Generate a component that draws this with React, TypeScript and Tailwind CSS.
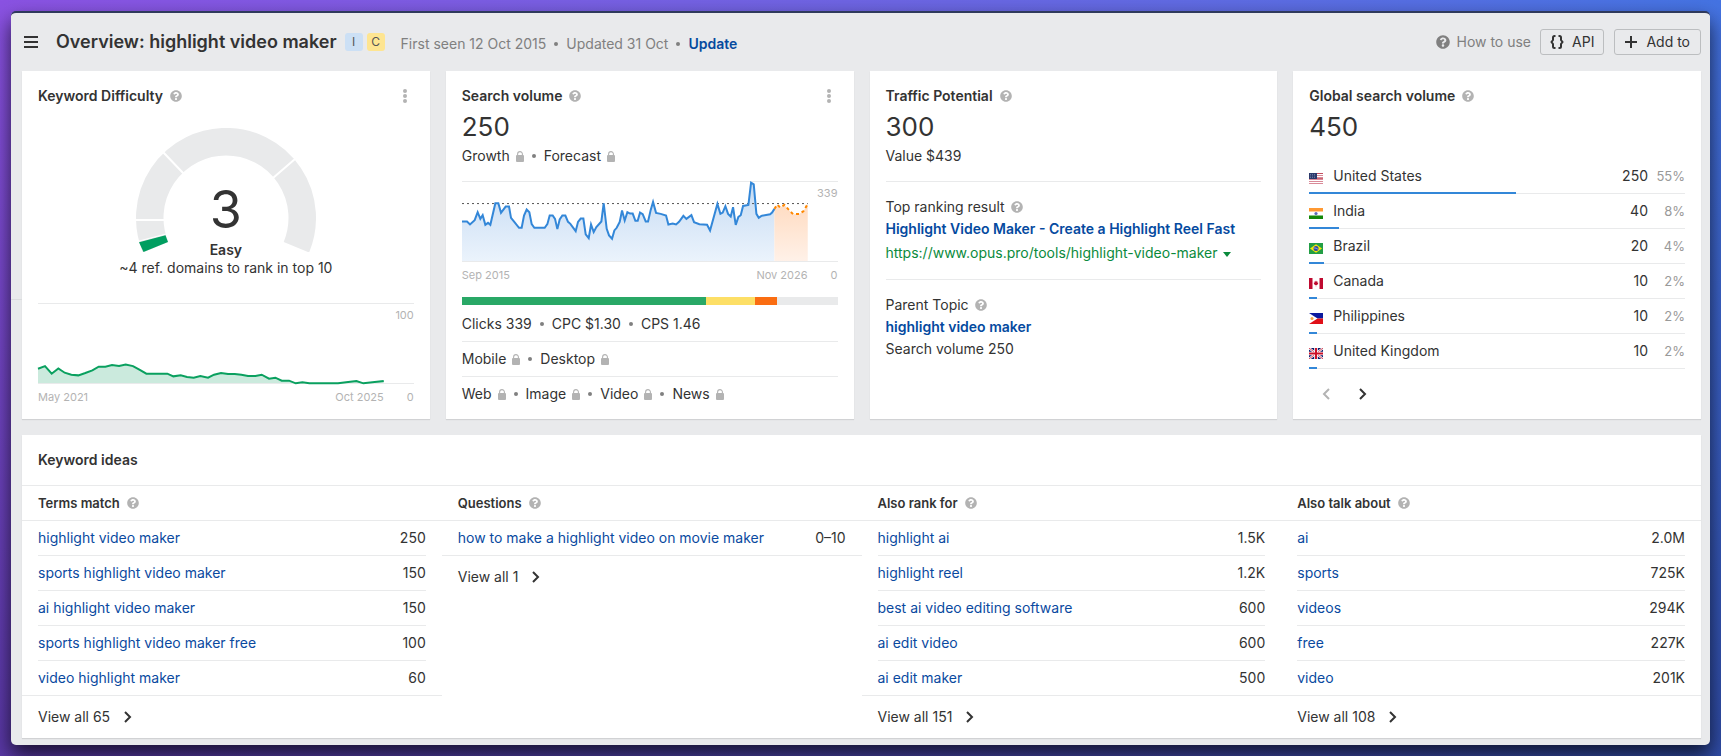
import type { ReactNode } from "react";
import { FaQuestionCircle } from "react-icons/fa";

type Idea = { keyword: string; volume: string };
type IdeaGroup = { title: string; total: number; ideas: Idea[] };

const difficultyPoints =
  "0,195 21,187 41,210 61,194 80,207 100,213 121,215 142,208 163,200 182,189 202,189 222,184 243,187 263,182 285,187 304,198 325,210 388,210 406,218 428,215 447,220 467,222 487,217 510,222 528,213 549,208 570,211 590,211 610,213 630,217 652,217 671,213 693,225 712,222 731,231 753,231 773,239 793,236 814,239 900,239 924,236 955,232 976,239 1037,232";

const volumePoints =
  "0,119 15,119 24,128 38,115 47,91 55,111 62,100 70,129 78,123 85,129 100,64 109,64 117,93 131,74 141,74 147,108 155,118 171,138 179,138 186,101 194,83 202,91 209,127 217,138 248,138 256,127 263,101 272,101 279,111 286,142 293,113 301,101 310,101 318,120 325,126 341,148 348,120 356,110 364,110 371,158 380,169 387,128 395,151 403,136 418,119 425,64 434,141 441,161 450,171 457,146 464,138 473,120 480,86 488,116 496,91 504,95 512,95 520,117 527,117 534,92 542,97 551,119 558,119 566,84 573,60 582,93 596,96 612,101 619,128 632,125 642,128 651,120 664,102 673,111 688,100 696,121 712,127 735,129 744,146 766,66 775,96 782,92 790,73 798,96 806,104 813,76 821,129 829,105 836,100 843,72 859,69 867,2 875,7 883,96 890,108 898,102 924,97 930,92 937,81";

const forecastPoints = "937,81 946,68 954,77 967,69 984,88 993,97 1012,96 1024,88 1037,66";

const countries = [
  { code: "us", name: "United States", volume: 250, share: 55 },
  { code: "in", name: "India", volume: 40, share: 8 },
  { code: "br", name: "Brazil", volume: 20, share: 4 },
  { code: "ca", name: "Canada", volume: 10, share: 2 },
  { code: "ph", name: "Philippines", volume: 10, share: 2 },
  { code: "gb", name: "United Kingdom", volume: 10, share: 2 },
];

const ideaGroups: IdeaGroup[] = [
  {
    title: "Terms match",
    total: 65,
    ideas: [
      { keyword: "highlight video maker", volume: "250" },
      { keyword: "sports highlight video maker", volume: "150" },
      { keyword: "ai highlight video maker", volume: "150" },
      { keyword: "sports highlight video maker free", volume: "100" },
      { keyword: "video highlight maker", volume: "60" },
    ],
  },
  {
    title: "Questions",
    total: 1,
    ideas: [{ keyword: "how to make a highlight video on movie maker", volume: "0–10" }],
  },
  {
    title: "Also rank for",
    total: 151,
    ideas: [
      { keyword: "highlight ai", volume: "1.5K" },
      { keyword: "highlight reel", volume: "1.2K" },
      { keyword: "best ai video editing software", volume: "600" },
      { keyword: "ai edit video", volume: "600" },
      { keyword: "ai edit maker", volume: "500" },
    ],
  },
  {
    title: "Also talk about",
    total: 108,
    ideas: [
      { keyword: "ai", volume: "2.0M" },
      { keyword: "sports", volume: "725K" },
      { keyword: "videos", volume: "294K" },
      { keyword: "free", volume: "227K" },
      { keyword: "video", volume: "201K" },
    ],
  },
];

const Help = () => <FaQuestionCircle className="h-3 w-3 shrink-0 text-[#b3b3b3]" />;

const Dot = () => <span className="block h-1 w-1 shrink-0 rounded-full bg-[#808080]" />;

const Lock = () => (
  <svg className="h-[11px] w-2 shrink-0" viewBox="0 0 8 11">
    <rect y="4" width="8" height="7" rx="1" fill="#b3b3b3" />
    <path d="M1.6 5V3a2.4 2.4 0 0 1 4.8 0v2" fill="none" stroke="#b3b3b3" strokeWidth="1.1" />
  </svg>
);

const Chevron = ({ left = false }: { left?: boolean }) => (
  <svg className="h-3 w-2" viewBox="0 0 8 12" fill="none" stroke="currentColor" strokeWidth="2">
    <path d={left ? "M7 1 2 6l5 5" : "M1 1l5 5-5 5"} />
  </svg>
);

const Flag = ({ code }: { code: string }) => (
  <svg className="h-[11px] w-[14px]" viewBox="0 0 14 11">
    {code === "us" && (
      <>
        <rect width="14" height="11" fill="#fff" />
        <path d="M0 .5h14M0 2.5h14M0 4.5h14M0 6.5h14M0 8.5h14M0 10.5h14" stroke="#d98a98" />
        <path d="M8 .5h6M8 5.5h6" stroke="#bd3d50" strokeWidth=".8" />
        <rect width="8" height="6" fill="#2b3a6b" />
        <path d="M1 1.5h6M1 3h6M1 4.5h6" stroke="#8f9abd" strokeWidth=".6" strokeDasharray="1 1" />
      </>
    )}
    {code === "in" && (
      <>
        <rect width="14" height="11" fill="#fff" />
        <rect width="14" height="3.5" fill="#ff9933" />
        <rect y="7.5" width="14" height="3.5" fill="#138808" />
        <circle cx="7" cy="5.5" r="1.6" fill="#5a68b8" />
      </>
    )}
    {code === "br" && (
      <>
        <rect width="14" height="11" fill="#229e45" />
        <path d="M7 1.2 13 5.5 7 9.8 1 5.5Z" fill="#f8e509" />
        <circle cx="7" cy="5.5" r="2.5" fill="#2b49a3" />
        <path d="M4.7 5c1.7-.2 3.4.3 4.5 1.6" stroke="#c9d4e8" strokeWidth=".7" fill="none" />
      </>
    )}
    {code === "ca" && (
      <>
        <rect width="14" height="11" fill="#fff" />
        <path d="M0 0h3.5v11H0zM10.5 0H14v11h-3.5z" fill="#bf0a30" />
        <path d="m7 2.5.7 1.2.8-.4-.2 1.4.9-.2-.3.9.5.4-1.5 1.2H7.2v1.5h-.4V7H6.1L4.600 5.800l.5-.4-.3-.9.9.2-.2-1.400.8.4Z" fill="#bf0a30" />
      </>
    )}
    {code === "ph" && (
      <>
        <rect width="14" height="5.5" fill="#0c1a9e" />
        <rect y="5.5" width="14" height="5.5" fill="#e01018" />
        <path d="M0 0 8.5 5.5 0 11Z" fill="#fff" />
        <circle cx="3" cy="5.5" r="1.5" fill="#f5a742" />
      </>
    )}
    {code === "gb" && (
      <>
        <rect width="14" height="11" fill="#0a1a6b" />
        <path d="M0 0l14 11M14 0 0 11" stroke="#fff" strokeWidth="2.2" />
        <path d="M0 0l14 11M14 0 0 11" stroke="#cc1028" strokeWidth=".8" />
        <path d="M7 0v11M0 5.5h14" stroke="#fff" strokeWidth="3.6" />
        <path d="M7 0v11M0 5.5h14" stroke="#cc1028" strokeWidth="2" />
      </>
    )}
  </svg>
);

const Card = ({ title, menu = false, children }: { title: string; menu?: boolean; children: ReactNode }) => (
  <section className="flex flex-col bg-white px-4 pt-[15px] shadow-[0_1px_1px_rgba(0,0,0,0.1)]">
    <div className="flex h-5 items-center gap-[7px]">
      <h2 className="font-semibold">{title}</h2>
      <Help />
      {menu && (
        <button aria-label={`${title} menu`} className="mr-[3px] ml-auto flex w-3 flex-col items-center gap-px">
          <span className="h-1 w-1 rounded-full bg-[#b3b3b3]" />
          <span className="h-1 w-1 rounded-full bg-[#b3b3b3]" />
          <span className="h-1 w-1 rounded-full bg-[#b3b3b3]" />
        </button>
      )}
    </div>
    {children}
  </section>
);

const Chart = ({ max, from, to, children }: { max: number; from: string; to: string; children: ReactNode }) => (
  <div className="text-[11px] leading-4 text-[#b3b3b3]">
    <div className="flex border-y border-[#e9eaeb]">
      <svg className="h-[79px] min-w-0 flex-1 overflow-visible" viewBox="0 0 1037 238" preserveAspectRatio="none">
        {children}
      </svg>
      <span className="w-[30px] pt-[3px] text-right">{max}</span>
    </div>
    <div className="flex pt-[5px]">
      <span>{from}</span>
      <span className="ml-auto">{to}</span>
      <span className="w-[30px] text-right">0</span>
    </div>
  </div>
);

const LockedList = ({ items }: { items: string[] }) => (
  <ul className="flex items-center gap-2">
    {items.map((item, i) => (
      <li key={item} className="flex items-center gap-2">
        {i > 0 && <Dot />}
        <span className="flex items-center gap-[6px]">
          {item}
          <Lock />
        </span>
      </li>
    ))}
  </ul>
);

const Gauge = () => (
  <div className="relative mx-auto mt-[22px] flex w-[180px] flex-col items-center">
    <svg className="h-[124px] w-[180px]" viewBox="0 0 180 124">
      <path d="M19.6 119.2A76.25 76.25 0 1 1 160.4 119.2" fill="none" stroke="#e9eaeb" strokeWidth="27.5" />
      <path d="M0 92H29M27 24 48 46M159 31 137 50" stroke="#fff" strokeWidth="2" />
      <path d="M3 114.3 29.5 107.3 32 114 7.5 124Z" fill="#009e60" />
      <path d="M2 113.3 30 106" stroke="#fff" />
    </svg>
    <span className="absolute top-[56px] text-[52px] leading-[52px]">3</span>
  </div>
);

const IdeasColumn = ({ group }: { group: IdeaGroup }) => (
  <div>
    <div className="flex h-[35px] items-center gap-[7px] border-b border-[#e9eaeb] px-4 text-[13px]">
      <h3 className="font-semibold">{group.title}</h3>
      <Help />
    </div>
    <div className="border-b border-[#e9eaeb] px-4">
      <table className="w-full border-separate border-spacing-0">
        <tbody>
          {group.ideas.map((idea, i) => (
            <tr key={idea.keyword} className={i === 0 ? "h-[34px]" : "h-[35px] *:border-t *:border-[#e9eaeb]"}>
              <td>
                <a href="#" className="text-[#0a4a9f]">
                  {idea.keyword}
                </a>
              </td>
              <td className="text-right">{idea.volume}</td>
            </tr>
          ))}
        </tbody>
      </table>
    </div>
    <a href="#" className="flex h-[42px] items-center gap-[14px] px-4">
      View all {group.total}
      <Chevron />
    </a>
  </div>
);

const App = () => {
  return (
    <div className="min-h-screen bg-linear-to-r from-[#8a52e2] to-[#4473e2] font-[Inter,sans-serif] text-sm leading-5 text-[#333]">
      <div className="min-h-screen bg-linear-to-b from-transparent to-[#10104a]/40 p-[11px]">
        <main className="relative rounded-[5px] border-t-2 border-[#2f3a5c] bg-[#e9eaec] pr-[9px] pb-[7px] pl-[11px] shadow-[0_10px_20px_rgba(0,0,0,0.7)]">
          <div className="absolute top-[286px] left-0 h-px w-[11px] bg-[#dadcde]" />
          <header className="flex h-[58px] items-center">
            <button aria-label="Menu" className="ml-[2px] flex w-[14px] flex-col gap-[3px]">
              <span className="h-[2px] w-full bg-[#333]" />
              <span className="h-[2px] w-full bg-[#333]" />
              <span className="h-[2px] w-full bg-[#333]" />
            </button>
            <h1 className="ml-[18px] text-lg font-semibold">Overview: highlight video maker</h1>
            <span className="ml-2 flex h-[18px] w-[18px] items-center justify-center rounded-[3px] bg-[#cce0f5] text-xs text-[#555]">
              I
            </span>
            <span className="ml-1 flex h-[18px] w-[18px] items-center justify-center rounded-[3px] bg-[#fee591] text-xs text-[#555]">
              C
            </span>
            <div className="ml-4 flex items-center gap-2 pt-[3px] text-[#808080]">
              <span>First seen 12 Oct 2015</span>
              <Dot />
              <span>Updated 31 Oct</span>
              <Dot />
              <a href="#" className="font-semibold text-[#054a9f]">
                Update
              </a>
            </div>
            <a href="#" className="ml-auto flex items-center gap-[6px] text-[#808080]">
              <FaQuestionCircle className="h-[14px] w-[14px]" />
              How to use
            </a>
            <button className="ml-[9px] flex h-[26px] items-center gap-2 rounded-[3px] border border-[#bcbec0] px-[9px]">
              <svg className="h-[14px] w-[14px]" viewBox="0 0 14 14" fill="none" stroke="#333" strokeWidth="2">
                <path d="M5.5 1H4.5Q3 1 3 2.500V5L1.500 7 3 9v2.500Q3 13 4.500 13h1M8.500 1h1Q11 1 11 2.500V5l1.500 2L11 9v2.500Q11 13 9.500 13h-1" />
              </svg>
              API
            </button>
            <button className="ml-[10px] flex h-[26px] items-center gap-[9px] rounded-[3px] border border-[#bcbec0] px-[10px]">
              <svg className="h-3 w-3" viewBox="0 0 12 12" stroke="#333" strokeWidth="2">
                <path d="M6 0v12M0 6h12" />
              </svg>
              Add to
            </button>
          </header>

          <div className="grid grid-cols-4 gap-4">
            <Card title="Keyword Difficulty" menu>
              <Gauge />
              <div className="-mt-[11px] flex flex-col items-center leading-[18px]">
                <b className="font-semibold">Easy</b>
                <span>~4 ref. domains to rank in top 10</span>
              </div>
              <div className="mt-[26px] mb-[14px]">
                <Chart max={100} from="May 2021" to="Oct 2025">
                  <polygon points={`0,238 ${difficultyPoints} 1037,238`} fill="#cbeadd" />
                  <polyline points={difficultyPoints} fill="none" stroke="#0aa05f" strokeWidth="2" vectorEffect="non-scaling-stroke" />
                </Chart>
              </div>
            </Card>

            <Card title="Search volume" menu>
              <p className="mt-1 text-[26px] leading-[34px]">250</p>
              <div className="mt-[2px]">
                <LockedList items={["Growth", "Forecast"]} />
              </div>
              <div className="mt-[15px]">
                <Chart max={339} from="Sep 2015" to="Nov 2026">
                  <defs>
                    <linearGradient id="volumeFill" x1="0" y1="0" x2="0" y2="1">
                      <stop offset="0" stopColor="#c5dbf3" />
                      <stop offset="1" stopColor="#ebf3fc" />
                    </linearGradient>
                    <linearGradient id="forecastFill" x1="0" y1="0" x2="0" y2="1">
                      <stop offset="0" stopColor="#ffdcc2" />
                      <stop offset="1" stopColor="#fff1e8" />
                    </linearGradient>
                  </defs>
                  <polygon points={`0,238 ${volumePoints} 937,238`} fill="url(#volumeFill)" />
                  <polygon points={`937,238 ${forecastPoints} 1037,238`} fill="url(#forecastFill)" />
                  <path d="M0 65H1037" stroke="#555" strokeWidth="1" strokeDasharray="2 3" vectorEffect="non-scaling-stroke" />
                  <polyline points={volumePoints} fill="none" stroke="#3387d8" strokeWidth="2" vectorEffect="non-scaling-stroke" />
                  <polyline points={forecastPoints} fill="none" stroke="#ff8800" strokeWidth="2" strokeDasharray="3 3" vectorEffect="non-scaling-stroke" />
                </Chart>
              </div>
              <div className="mt-[14px] flex h-2 bg-[#e9eaeb]">
                <span className="w-[65%] bg-[#29a866]" />
                <span className="w-[13%] bg-[#fddf66]" />
                <span className="w-[6%] bg-[#fa6d12]" />
              </div>
              <div className="mt-[2px] flex h-[35px] items-center gap-2 border-b border-[#e9eaeb]">
                <span>Clicks 339</span>
                <Dot />
                <span>CPC $1.30</span>
                <Dot />
                <span>CPS 1.46</span>
              </div>
              <div className="flex h-[35px] items-center border-b border-[#e9eaeb]">
                <LockedList items={["Mobile", "Desktop"]} />
              </div>
              <div className="flex h-[34px] items-center">
                <LockedList items={["Web", "Image", "Video", "News"]} />
              </div>
            </Card>

            <Card title="Traffic Potential">
              <p className="mt-1 text-[26px] leading-[34px]">300</p>
              <p className="mt-[2px] border-b border-[#e9eaeb] pb-[15px]">Value $439</p>
              <div className="border-b border-[#e9eaeb] pt-[15px] pb-4">
                <p className="flex items-center gap-[6px]">
                  Top ranking result <Help />
                </p>
                <a href="#" className="mt-[2px] block font-semibold text-[#054a9f]">
                  Highlight Video Maker - Create a Highlight Reel Fast
                </a>
                <a href="#" className="mt-1 flex items-center gap-[5px] text-[#0a8a3c]">
                  https://www.opus.pro/tools/highlight-video-maker
                  <svg className="mt-[2px] h-[5px] w-2" viewBox="0 0 8 5" fill="currentColor">
                    <path d="M0 0h8L4 5Z" />
                  </svg>
                </a>
              </div>
              <div className="pt-[15px]">
                <p className="flex items-center gap-[6px]">
                  Parent Topic <Help />
                </p>
                <a href="#" className="mt-[2px] block font-semibold text-[#054a9f]">
                  highlight video maker
                </a>
                <p className="mt-[2px]">Search volume 250</p>
              </div>
            </Card>

            <Card title="Global search volume">
              <p className="mt-1 text-[26px] leading-[34px]">450</p>
              <table className="mt-[15px] w-full border-separate border-spacing-0">
                <tbody>
                  {countries.map((c) => (
                    <tr key={c.code} className="relative h-[35px] *:border-b *:border-[#e9eaeb]">
                      <td className="w-6">
                        <div className="pt-1">
                          <Flag code={c.code} />
                        </div>
                        <div className="absolute bottom-0 left-0 h-[2px] bg-[#3387d8]" style={{ width: `${c.share}%` }} />
                      </td>
                      <td>{c.name}</td>
                      <td className="text-right">{c.volume}</td>
                      <td className="w-[37px] text-right text-[13px] text-[#999]">{c.share}%</td>
                    </tr>
                  ))}
                </tbody>
              </table>
              <div className="mt-[11px] ml-[9px] flex gap-[21px]">
                <button aria-label="Previous" disabled className="flex h-7 w-4 items-center justify-center text-[#b3b3b3]">
                  <Chevron left />
                </button>
                <button aria-label="Next" className="flex h-7 w-4 items-center justify-center">
                  <Chevron />
                </button>
              </div>
            </Card>
          </div>

          <section className="mt-4 bg-white shadow-[0_1px_1px_rgba(0,0,0,0.1)]">
            <h2 className="flex h-[51px] items-center border-b border-[#e9eaeb] px-4 font-semibold">Keyword ideas</h2>
            <div className="grid grid-cols-4">
              {ideaGroups.map((group) => (
                <IdeasColumn key={group.title} group={group} />
              ))}
            </div>
          </section>
        </main>
      </div>
    </div>
  );
};

export default App;
